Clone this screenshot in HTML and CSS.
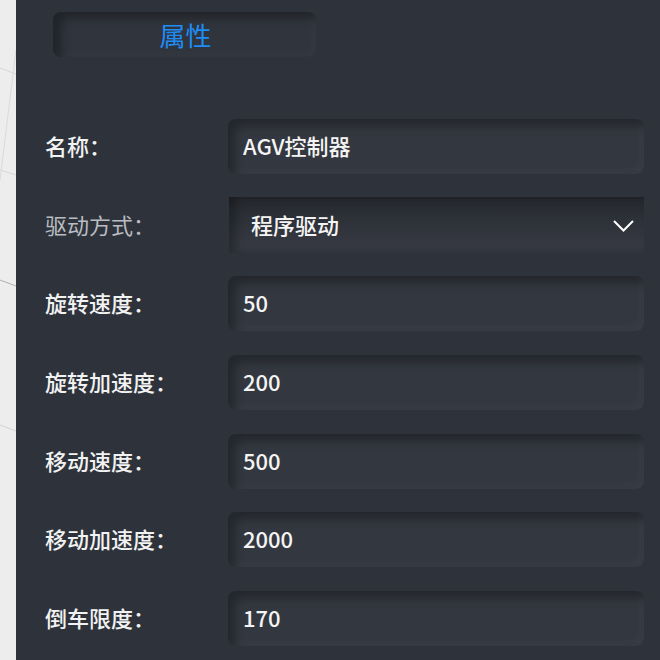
FILE: index.html
```html
<!DOCTYPE html>
<html lang="zh-CN">
<head>
<meta charset="utf-8">
<title>属性</title>
<link rel="stylesheet" href="styles.css">
</head>
<body>
<div class="page">
  <div class="canvas">
    <svg class="canvas-lines" width="16" height="660" viewBox="0 0 16 660">
      <line x1="0" y1="68" x2="16" y2="74" stroke="#d6d6d6" stroke-width="1"/>
      <line x1="16" y1="50" x2="0" y2="180" stroke="#dadada" stroke-width="1"/>
      <line x1="0" y1="170" x2="16" y2="175" stroke="#d6d6d6" stroke-width="1"/>
      <line x1="0" y1="280" x2="16" y2="286" stroke="#b0b0b0" stroke-width="1"/>
      <line x1="0" y1="425" x2="16" y2="431" stroke="#d2d2d2" stroke-width="1"/>
    </svg>
  </div>
  <div class="panel">
    <div class="tab">属性</div>
    <div class="form">
      <div class="row">
        <div class="label">名称：</div>
        <div class="input">AGV控制器</div>
      </div>
      <div class="row">
        <div class="label label-muted">驱动方式：</div>
        <div class="select">
          <span>程序驱动</span>
          <svg class="chevron" width="21" height="12" viewBox="0 0 21 12">
            <polyline points="1,1 10.5,10.5 20,1" fill="none" stroke="#ffffff" stroke-width="2"/>
          </svg>
        </div>
      </div>
      <div class="row">
        <div class="label">旋转速度：</div>
        <div class="input">50</div>
      </div>
      <div class="row">
        <div class="label">旋转加速度：</div>
        <div class="input">200</div>
      </div>
      <div class="row">
        <div class="label">移动速度：</div>
        <div class="input">500</div>
      </div>
      <div class="row">
        <div class="label">移动加速度：</div>
        <div class="input">2000</div>
      </div>
      <div class="row">
        <div class="label">倒车限度：</div>
        <div class="input">170</div>
      </div>
    </div>
  </div>
</div>
</body>
</html>
```
FILE: styles.css
```css
html, body {
  margin: 0;
  padding: 0;
  width: 660px;
  height: 660px;
  overflow: hidden;
  font-family: "Noto Sans CJK SC", "Noto Sans", sans-serif;
}

.page {
  display: flex;
  width: 660px;
  height: 660px;
}

.canvas {
  width: 16px;
  flex: 0 0 16px;
  background: #ededed;
}

.canvas-lines {
  display: block;
}

.panel {
  flex: 1;
  background: #2e333b;
  padding: 12px 16px 0 29px;
  box-sizing: border-box;
}

.tab {
  width: 263px;
  height: 45px;
  margin-left: 8px;
  border-radius: 8px;
  background: #30343c;
  box-shadow: inset 8px 6px 10px rgba(0, 0, 0, 0.32), inset -4px -4px 8px rgba(255, 255, 255, 0.025);
  color: #1e8cf5;
  font-size: 26px;
  line-height: 45px;
  text-align: center;
  text-indent: 2px;
}

.form {
  display: flex;
  flex-direction: column;
  gap: 23.67px;
  margin-top: 62px;
}

.row {
  display: flex;
  align-items: center;
  height: 55px;
}

.label {
  width: 183px;
  flex: 0 0 183px;
  color: #f2f2f2;
  font-size: 22px;
  font-weight: 500;
  line-height: 55px;
  margin-top: -2px;
}

.label-muted {
  color: #b9bcc1;
  font-weight: 400;
}

.input {
  flex: 1;
  height: 55px;
  box-sizing: border-box;
  padding-left: 15px;
  border-radius: 8px;
  background: #33373f;
  box-shadow: inset 7px 7px 10px rgba(0, 0, 0, 0.3), inset -4px -4px 8px rgba(255, 255, 255, 0.03);
  color: #f4f4f4;
  font-size: 22px;
  font-weight: 500;
  line-height: 52px;
}

.select {
  flex: 1;
  height: 56px;
  margin-left: 1px;
  box-sizing: border-box;
  padding: 0 10px 3px 22px;
  display: flex;
  align-items: center;
  justify-content: space-between;
  background: linear-gradient(to bottom, #24272c 0%, #2c3037 35%, #33363e 70%, #383b44 100%);
  box-shadow: inset 7px 0 9px rgba(0, 0, 0, 0.25);
  color: #f4f4f4;
  font-size: 22px;
  font-weight: 500;
}

.chevron {
  display: block;
  margin-top: 5px;
}
```
